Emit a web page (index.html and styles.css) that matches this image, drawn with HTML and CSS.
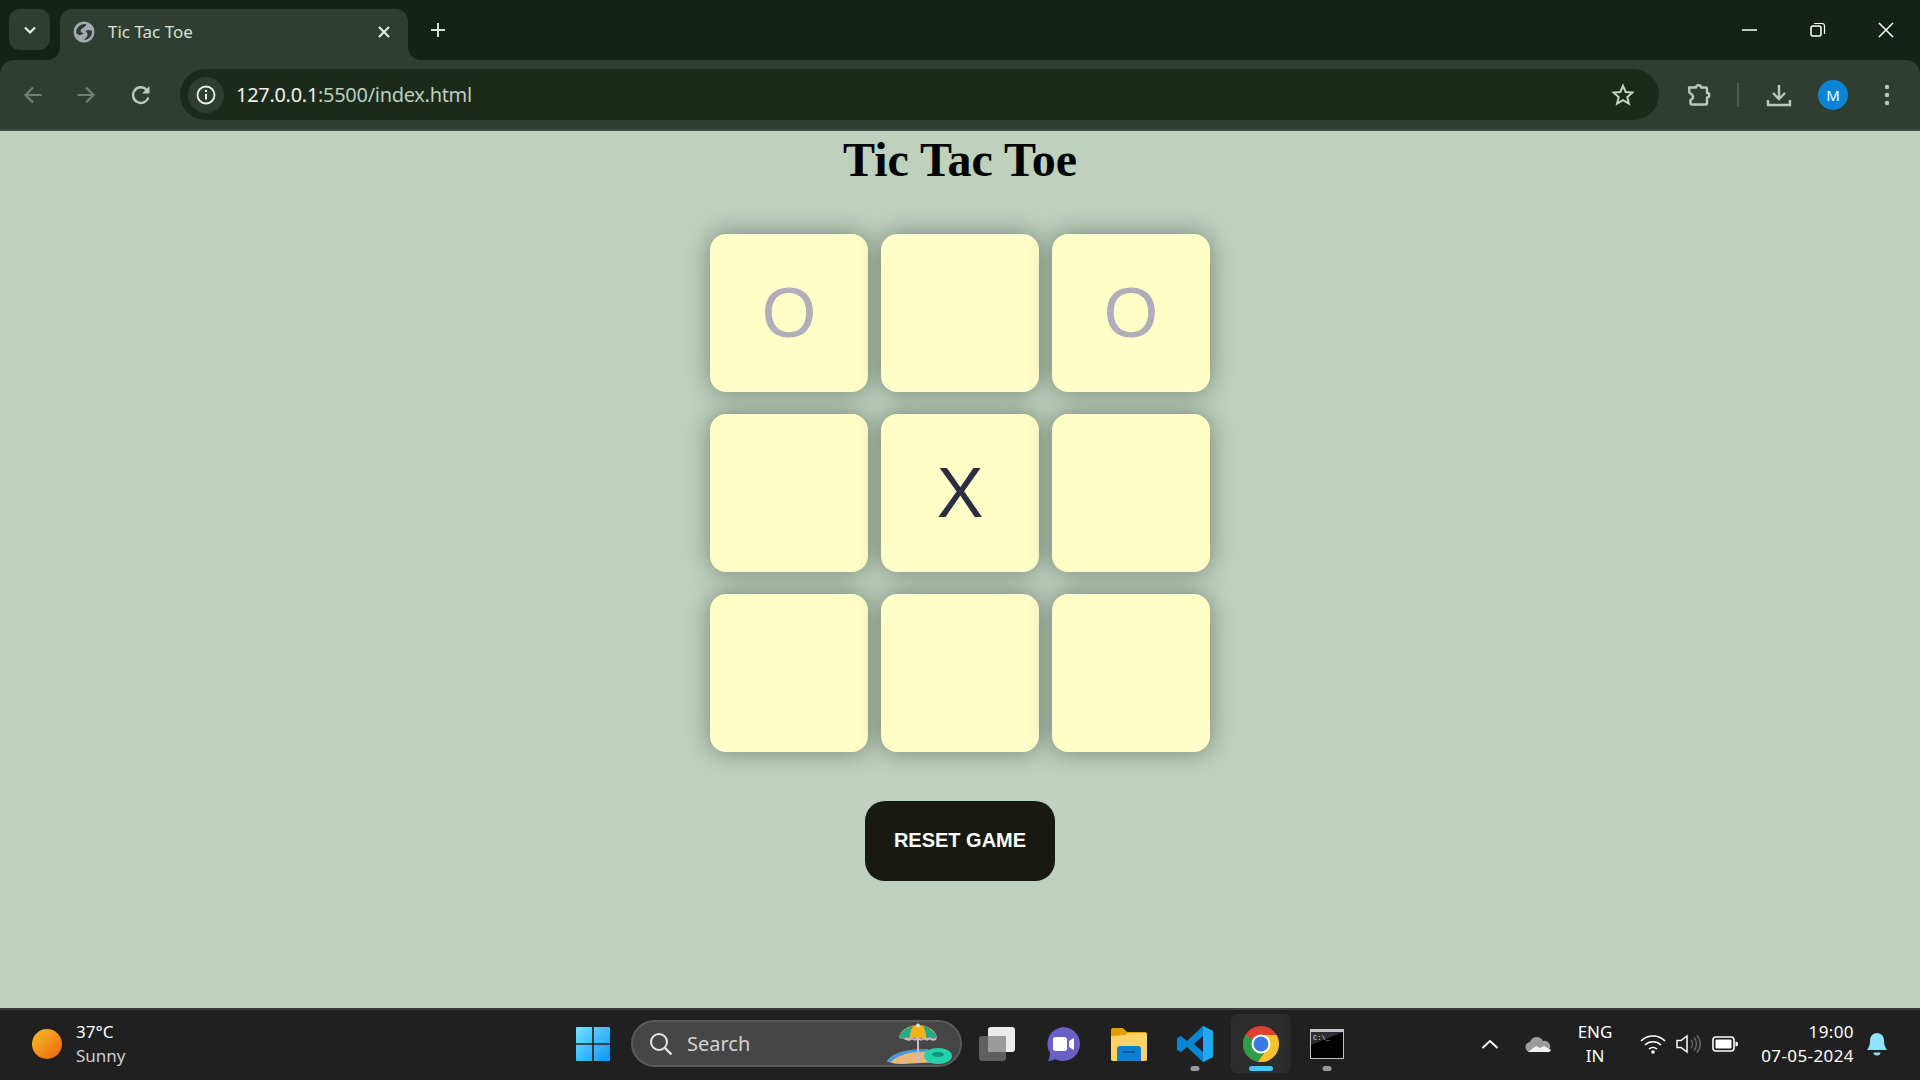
FILE: index.html
```html
<!DOCTYPE html>
<html lang="en">
<head>
<meta charset="utf-8">
<title>Tic Tac Toe</title>
<link rel="stylesheet" href="styles.css">
</head>
<body>
<header class="browser">
  <div class="tabstrip">
    <div class="tab-search"><svg width="16" height="16" viewBox="0 0 16 16"><path d="M3 5.500l5 5 5-5" fill="none" stroke="#e8efe8" stroke-width="2.200"/></svg></div>
    <div class="tab">
      <svg class="tab-globe" width="22" height="22" viewBox="0 0 22 22"><circle cx="11" cy="11" r="10.500" fill="#a5a9b4"/><path d="M3.200 12C2.800 7.500 6.500 3 12 3l1.500.3C13 5.500 10.500 6.500 8.500 8 7 9.200 7.500 11.500 9.500 12l1.500.5C8 14.500 5 14.500 3.200 12z" fill="#2f3e30"/><path d="M19 10c.5 4.500-3 9-8 9 1-2 3-2.500 3.500-4.500.5-2.500-1-3.500-2-4.500 2-1.500 4.500-1.500 6.500 0z" fill="#2f3e30"/></svg>
      <span class="tab-title">Tic Tac Toe</span>
      <svg class="tab-close" width="14" height="14" viewBox="0 0 14 14"><path d="M2 2l10 10M12 2L2 12" stroke="#e8efe8" stroke-width="2"/></svg>
    </div>
    <svg class="new-tab" width="18" height="18" viewBox="0 0 18 18"><path d="M9 2v14M2 9h14" stroke="#d5e0d5" stroke-width="2"/></svg>
    <div class="window-controls">
      <svg width="16" height="16" viewBox="0 0 16 16"><path d="M0 8h15" stroke="#fff" stroke-width="1.500"/></svg>
      <svg width="16" height="16" viewBox="0 0 16 16"><rect x="1" y="4" width="10" height="10" rx="2" fill="none" stroke="#fff" stroke-width="1.500"/><path d="M4 1.500h8a2.500 2.500 0 0 1 2.500 2.500v8" fill="none" stroke="#fff" stroke-width="1.200"/></svg>
      <svg width="16" height="16" viewBox="0 0 16 16"><path d="M1 1l14 14M15 1L1 15" stroke="#fff" stroke-width="1.500"/></svg>
    </div>
  </div>
  <div class="toolbar">
    <svg class="nav nav-back" width="20" height="20" viewBox="0 0 20 20"><path d="M18.500 10H3M10 2.500L2.500 10l7.500 7.500" fill="none" stroke="#6f7f70" stroke-width="2.200"/></svg>
    <svg class="nav nav-forward" width="20" height="20" viewBox="0 0 20 20"><path d="M1.500 10H17M10 2.500l7.500 7.500-7.500 7.500" fill="none" stroke="#6f7f70" stroke-width="2.200"/></svg>
    <svg class="nav nav-reload" width="20" height="20" viewBox="0 0 20 20"><path d="M17.300 12.500A7.800 7.800 0 1 1 15.500 4.700" fill="none" stroke="#b9ccb9" stroke-width="2.400"/><path d="M18.500 1v7.500H11z" fill="#b9ccb9"/></svg>
    <div class="omnibox">
      <div class="info-chip"><svg width="20" height="20" viewBox="0 0 20 20"><circle cx="10" cy="10" r="8.500" fill="none" stroke="#eef3ee" stroke-width="1.800"/><path d="M10 9v5.500" stroke="#eef3ee" stroke-width="2"/><circle cx="10" cy="6" r="1.200" fill="#eef3ee"/></svg></div>
      <span class="url"><span class="url-host">127.0.0.1</span>:5500/index.html</span>
      <svg class="star" width="24" height="24" viewBox="0 0 24 24"><path d="M12 2.800l2.700 6.200 6.700.6-5.100 4.400 1.600 6.600L12 17.100l-5.900 3.500 1.600-6.600-5.100-4.400 6.700-.6z" fill="none" stroke="#c5d4c5" stroke-width="2"/></svg>
    </div>
    <svg class="puzzle" width="26" height="26" viewBox="0 0 26 26"><path d="M4 5.500h7a2.500 2.200 0 0 1 5 0h4.500A1.500 1.500 0 0 1 22 7v4a2.200 2.200 0 0 1 0 4.500V21a1.500 1.500 0 0 1-1.500 1.500H7A1.500 1.500 0 0 1 5.500 21v-3c2-.8 2.500-2 2.500-3.200S7 12 4.500 11L4 5.500z" fill="none" stroke="#b9ccb9" stroke-width="2.400" stroke-linejoin="round"/></svg>
    <span class="tool-sep"></span>
    <svg class="download" width="26" height="26" viewBox="0 0 26 26"><path d="M13 3v14M7 11l6 6 6-6" fill="none" stroke="#b9ccb9" stroke-width="2.400"/><path d="M2 18v5h22v-5" fill="none" stroke="#b9ccb9" stroke-width="2.400"/></svg>
    <span class="avatar">M</span>
    <svg class="menu-dots" width="8" height="24" viewBox="0 0 8 24"><circle cx="4" cy="4" r="2.200" fill="#b9ccb9"/><circle cx="4" cy="12" r="2.200" fill="#b9ccb9"/><circle cx="4" cy="20" r="2.200" fill="#b9ccb9"/></svg>
  </div>
</header>

<main class="page">
  <h1 class="title">Tic Tac Toe</h1>
  <div class="board">
    <button class="cell cell-o">O</button>
    <button class="cell"></button>
    <button class="cell cell-o">O</button>
    <button class="cell"></button>
    <button class="cell cell-x">X</button>
    <button class="cell"></button>
    <button class="cell"></button>
    <button class="cell"></button>
    <button class="cell"></button>
  </div>
  <button class="reset">RESET GAME</button>
</main>

<footer class="taskbar">
  <div class="weather">
    <span class="sun"></span>
    <div class="weather-text"><span class="temp">37°C</span><span class="cond">Sunny</span></div>
  </div>
  <svg class="win-logo" width="36" height="36" viewBox="0 0 36 36"><defs><linearGradient id="w" x1="0" y1="0" x2="1" y2="1"><stop offset="0" stop-color="#6fe3ff"/><stop offset="1" stop-color="#0f95f5"/></linearGradient></defs><path d="M1 2a1 1 0 0 1 1-1h15.200v16.200H1zM18.800 1H34a1 1 0 0 1 1 1v15.200H18.800zM1 18.800h16.200V35H2a1 1 0 0 1-1-1zM18.800 18.800H35V34a1 1 0 0 1-1 1H18.800z" fill="url(#w)"/></svg>
  <div class="searchbox">
    <svg width="24" height="24" viewBox="0 0 24 24"><circle cx="10" cy="10" r="8" fill="none" stroke="#e6e6e6" stroke-width="2"/><path d="M16 16l6.500 6.500" stroke="#e6e6e6" stroke-width="2.400"/></svg>
    <span class="search-label">Search</span>
    <svg class="beach" width="68" height="42" viewBox="0 0 68 42"><path d="M1 38C8 29 22 26 42 27l12 12-38 2C9 41 4 40 1 38z" fill="#e9b778"/><path d="M1 38C8 29 22 26 42 26l2 3C28 28 12 31 5 39z" fill="#3f9be0"/><path d="M31 13h2v26h-2z" fill="#c9b9d6"/><path d="M13 14C15 6 24 2 32 2s17 4 19 12c-3 2-5 2-7 .5-3 2-6 2-8 0-2 2-6 2-8 0-2 2-6 2-8 0-2 1.500-5 1.500-7-.5z" fill="#f2b21d"/><path d="M13 14c2-6 9-10 14-11-2 3-3 7-3 11-3 1-8 1.500-11 0zM51 14c-2-6-9-10-14-11 2 3 3 7 3 11 3 1 8 1.500 11 0z" fill="#20a98a"/><path d="M13 14c2 2 5 2 7 .5 2 1.500 4 1.500 6 0 2 1.500 4 1.500 6 0 2 1.500 4 1.500 6 0 2 1.500 4 1.500 6 0 2 1.500 5 1.500 7-.5l-1 3c-2 1-4 1-6-.5-2 1.500-4 1.500-6 0-2 1.500-4 1.500-6 0-2 1.500-4 1.500-6 0-2 1.500-4 1.500-6 .5z" fill="#c7b3dd"/><circle cx="32" cy="2.500" r="2" fill="#ddd"/><ellipse cx="52" cy="33" rx="14" ry="8" fill="#25d0ad"/><ellipse cx="52" cy="31.500" rx="6" ry="2.500" fill="#139279"/></svg>
  </div>
  <div class="task-icons">
    <span class="task-slot">
      <svg width="38" height="36" viewBox="0 0 38 36"><rect x="1" y="10" width="27" height="25" rx="3" fill="#5f5f5f"/><rect x="10" y="1" width="27" height="25" rx="3" fill="#ececec"/><path d="M10 10h18v16H13a3 3 0 0 1-3-3z" fill="#9b9b9b"/></svg>
    </span>
    <span class="task-slot">
      <svg width="36" height="36" viewBox="0 0 36 36"><path d="M18 1a17 17 0 1 1-8 32c-2 1.500-5 2-7 2 1-2 2-5 2-8A17 17 0 0 1 18 1z" fill="#6a5fc7"/><rect x="8" y="11" width="14" height="14" rx="2.500" fill="#fff"/><path d="M24 15l5-3v12l-5-3z" fill="#fff"/></svg>
    </span>
    <span class="task-slot">
      <svg width="36" height="34" viewBox="0 0 36 34"><path d="M0 3a2 2 0 0 1 2-2h10l4 4h18a2 2 0 0 1 2 2v25a2 2 0 0 1-2 2H2a2 2 0 0 1-2-2z" fill="#e0a100"/><path d="M0 9l14-1 3-2h17a2 2 0 0 1 2 2v24a2 2 0 0 1-2 2H2a2 2 0 0 1-2-2z" fill="#fdd366"/><path d="M6 22a3 3 0 0 1 3-3h18a3 3 0 0 1 3 3v12H6z" fill="#0f7fd1"/><path d="M12 25h12" stroke="#075a9a" stroke-width="2"/></svg>
    </span>
    <span class="task-slot has-dot">
      <svg width="36" height="36" viewBox="0 0 36 36"><path d="M26 0l10 5v26l-10 5-16-15-6 5-4-2V12l4-2 6 5zM26 10l-9 8 9 8z" fill="#0a85d1"/><path d="M26 0l10 5v26l-10 5z" fill="#23a8f2"/></svg>
      <span class="dot"></span>
    </span>
    <span class="task-slot active">
      <svg width="36" height="36" viewBox="0 0 36 36"><circle cx="18" cy="18" r="18" fill="#e0402f"/><path d="M18 18L2.400 9A18 18 0 0 0 15 35.800L24 23z" fill="#2f9e4a"/><path d="M18 9h15.600A18 18 0 0 1 15 35.800L24 23z" fill="#fbc02d"/><circle cx="18" cy="18" r="9.500" fill="#fff"/><circle cx="18" cy="18" r="7.500" fill="#3b78e7"/></svg>
      <span class="pill"></span>
    </span>
    <span class="task-slot has-dot">
      <svg width="34" height="30" viewBox="0 0 34 30"><rect width="34" height="30" fill="#bfc4c8"/><rect x="1" y="3" width="32" height="26" fill="#000"/><text x="3" y="11" class="cmd-text">C:\_</text><path d="M1 3h32L1 16z" fill="#fff" opacity=".18"/></svg>
      <span class="dot"></span>
    </span>
  </div>
  <div class="tray">
    <svg class="tray-chevron" width="18" height="10" viewBox="0 0 18 10"><path d="M1.500 9L9 2l7.500 7" fill="none" stroke="#fff" stroke-width="1.800"/></svg>
    <svg class="tray-cloud" width="26" height="16" viewBox="0 0 26 16"><path d="M6 16a5 5 0 0 1-1-10 7 7 0 0 1 13-1 5.500 5.500 0 0 1 3 11z" fill="#9b9b9b"/><path d="M3 16l8-6 4 2 4-2 7 4a3 3 0 0 1-3 2z" fill="#f2f2f2"/></svg>
    <div class="lang"><span>ENG</span><span>IN</span></div>
    <svg class="tray-wifi" width="26" height="20" viewBox="0 0 26 20"><path d="M1 7a17 17 0 0 1 24 0M5 11a11.500 11.500 0 0 1 16 0M9 15a6 6 0 0 1 8 0" fill="none" stroke="#fff" stroke-width="1.600"/><circle cx="13" cy="18" r="1.800" fill="#fff"/></svg>
    <svg class="tray-sound" width="26" height="20" viewBox="0 0 26 20"><path d="M1 6.500h4L11 2v16l-6-4.500H1z" fill="none" stroke="#fff" stroke-width="1.500"/><path d="M15 6a6 6 0 0 1 0 8M18 3.500a10 10 0 0 1 0 13M21 1.500a13 13 0 0 1 0 17" fill="none" stroke="#666" stroke-width="1.500"/></svg>
    <svg class="tray-battery" width="26" height="16" viewBox="0 0 26 16"><rect x="1" y="1" width="21" height="14" rx="3" fill="none" stroke="#fff" stroke-width="1.600"/><rect x="3.500" y="3.500" width="16" height="9" rx="1" fill="#fff"/><path d="M23.500 5.500a2.500 2.500 0 0 1 0 5z" fill="#fff"/></svg>
    <div class="clock"><span>19:00</span><span>07-05-2024</span></div>
    <svg class="tray-bell" width="22" height="24" viewBox="0 0 22 24"><path d="M11 1a7 7 0 0 1 7 7c0 5 1 7 3 10H1c2-3 3-5 3-10a7 7 0 0 1 7-7z" fill="#8fe3fb"/><path d="M7.500 20.500h7a3.500 3 0 0 1-7 0z" fill="#8fe3fb"/></svg>
  </div>
</footer>
</body>
</html>
```
FILE: styles.css
```css
* { box-sizing: border-box; }
html, body { margin: 0; height: 100%; }
body {
  display: flex;
  flex-direction: column;
  height: 100vh;
  overflow: hidden;
  background: #bdd1bd;
}
svg { display: block; flex: none; }

/* browser chrome */
.browser { flex: none; background: #152316; font-family: "Noto Sans", "Open Sans", sans-serif; }
.tabstrip { display: flex; align-items: flex-start; height: 60px; padding: 9px 0 0 9px; }
.tab-search {
  width: 41px; height: 41px; border-radius: 11px; background: #2f3e30;
  display: flex; align-items: center; justify-content: center;
}
.tab {
  position: relative;
  width: 348px; height: 51px; margin-left: 10px;
  background: #2f3e30; border-radius: 12px 12px 0 0;
  display: flex; align-items: center; padding: 0 17px 6px 13px;
}
.tab::before, .tab::after {
  content: ""; position: absolute; bottom: 0; width: 12px; height: 12px;
}
.tab::before { left: -12px; background: radial-gradient(circle at 0 0, transparent 11.500px, #2f3e30 12px); }
.tab::after { right: -12px; background: radial-gradient(circle at 100% 0, transparent 11.500px, #2f3e30 12px); }
.tab-title { margin-left: 13px; font-size: 17px; color: #d7e1d7; flex: 1; letter-spacing: 0; }
.new-tab { margin: 12px 0 0 21px; }
.window-controls { margin-left: auto; display: flex; align-items: center; gap: 52px; padding: 13px 26px 0 0; }

.toolbar {
  height: 71px; background: #2f3e30; border-bottom: 2px solid #3e4b3f;
  border-radius: 14px 14px 0 0;
  display: flex; align-items: center; padding: 0 0 0 23px;
}
.nav-forward { margin-left: 33px; }
.nav-reload { margin-left: 35px; }
.omnibox {
  width: 1479px; height: 51px; margin-left: 29px; border-radius: 26px; background: #1c2a1c;
  display: flex; align-items: center; padding: 0 24px 0 8px;
}
.info-chip {
  width: 36px; height: 36px; border-radius: 50%; background: #2f3e30;
  display: flex; align-items: center; justify-content: center;
}
.url { margin-left: 12px; font-size: 20px; color: #bdcdbd; flex: 1; letter-spacing: -0.3px; }
.url-host { color: #edf2ed; }
.puzzle { margin-left: 26px; }
.tool-sep { width: 2px; height: 24px; background: #4d5c4e; margin-left: 26px; }
.download { margin-left: 27px; }
.avatar {
  width: 30px; height: 30px; border-radius: 50%; background: #0a84d6; color: #fff;
  display: flex; align-items: center; justify-content: center; font-size: 15px; margin-left: 26px;
}
.menu-dots { margin-left: 35px; }

/* page */
.page { flex: 1; display: flex; flex-direction: column; align-items: center; min-height: 0; }
.title {
  margin: 1px 0 0; font-family: "Liberation Serif", serif; font-size: 48px; font-weight: 700;
  line-height: 55px; color: #000;
}
.board {
  display: grid; grid-template-columns: repeat(3, 158px); grid-auto-rows: 158px;
  column-gap: 13px; row-gap: 22px; margin-top: 47px;
}
.cell {
  border: 0; padding: 0; border-radius: 16px; background: #ffffc7;
  box-shadow: 0 0 24px rgba(0, 0, 0, .38);
  font-family: "Liberation Sans", sans-serif; font-size: 70px;
  display: flex; align-items: center; justify-content: center;
}
.cell-o { color: #b0aebb; }
.cell-x { color: #2b2d42; }
.reset {
  margin-top: 49px; width: 190px; height: 80px; border: 0; border-radius: 20px;
  background: #191913; color: #fff; padding: 0 0 2px;
  font-family: "Liberation Sans", sans-serif; font-weight: 700; font-size: 20px;
}

/* taskbar */
.taskbar {
  flex: none; height: 72px; background: #202020; border-top: 2px solid #3b3b39;
  display: flex; align-items: center; color: #fff; padding-bottom: 3px;
  font-family: "Noto Sans", "Open Sans", sans-serif;
}
.weather { width: 575px; padding-left: 32px; display: flex; align-items: center; gap: 14px; }
.sun { width: 30px; height: 30px; border-radius: 50%; background: linear-gradient(135deg, #f2c029, #f0630c); }
.weather-text { display: flex; flex-direction: column; font-size: 17px; line-height: 24px; }
.cond { color: #cfcfcf; }
.searchbox {
  width: 331px; height: 47px; margin-left: 20px; border-radius: 24px; background: #464646;
  border: 2px solid #5a5a5a; display: flex; align-items: center; padding-left: 16px;
  position: relative;
}
.search-label { margin-left: 14px; font-size: 20px; color: #d4d4d4; }
.beach { position: absolute; right: 6px; bottom: 0; }
.task-icons { display: flex; align-items: center; margin-left: 2px; }
.task-slot {
  position: relative; width: 66px; height: 59px;
  display: flex; align-items: center; justify-content: center;
}
.task-slot.active {
  background: #2d2d2d; border-radius: 6px; box-shadow: 6px 0 0 #2a2a2a;
  width: 54px; margin: 0 9px 0 3px; padding-left: 6px;
}
.dot, .pill { position: absolute; bottom: 2px; left: 50%; transform: translateX(-50%); height: 5px; border-radius: 3px; }
.pill { left: calc(50% + 3px); width: 24px; background: #4cc2ff; }
.dot { width: 9px; background: #9a9a9a; }
.cmd-text { font-family: "Liberation Mono", monospace; font-size: 7px; fill: #ddd; }
.tray { margin-left: auto; display: flex; align-items: center; padding-right: 32px; }
.tray-cloud { margin-left: 26px; }
.lang {
  margin-left: 26px; width: 36px; display: flex; flex-direction: column; align-items: center;
  font-size: 17px; line-height: 24px;
}
.tray-wifi { margin-left: 27px; }
.tray-sound { margin-left: 10px; }
.tray-battery { margin-left: 10px; }
.clock {
  margin-left: 16px; width: 100px; display: flex; flex-direction: column; align-items: flex-end;
  font-size: 17px; line-height: 24px; letter-spacing: .4px;
}
.tray-bell { margin-left: 12px; }
```
